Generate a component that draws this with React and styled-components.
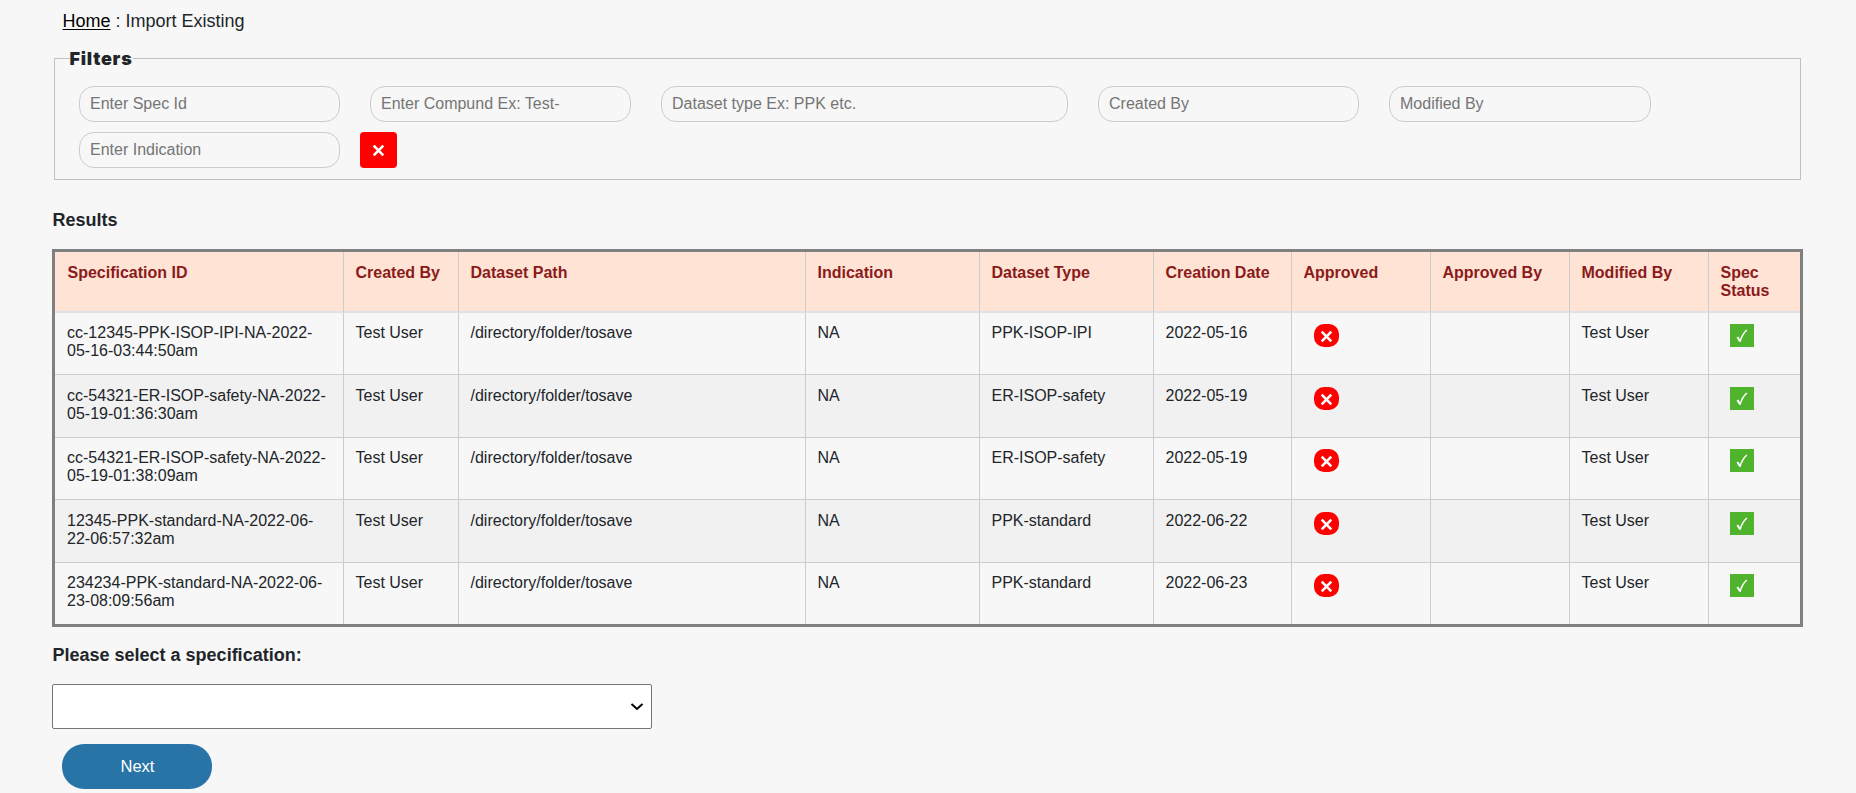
import React from 'react';
import styled, { createGlobalStyle } from 'styled-components';

const Global = createGlobalStyle`
  *, *::before, *::after { box-sizing: border-box; }
  body {
    margin: 0;
    background: #f7f7f7;
    color: #212529;
    font: 16px/18px "Liberation Sans", Arial, sans-serif;
    overflow: hidden;
  }
`;

const Page = styled.main`
  width: 1751px;
  margin-left: 52px;
  height: 793px;
  overflow: hidden;
`;

const Breadcrumb = styled.nav`
  padding: 11px 0 0 10.5px;
  font-size: 18px;
  line-height: 20px;
  a { color: #000; text-decoration: underline; text-underline-offset: 2px; text-decoration-thickness: 1px; }
`;

const Filters = styled.fieldset`
  width: 1747px;
  height: 132px;
  margin: 17px 0 0 2px;
  padding: 0 0 0 24px;
  border: 1px solid #c0c0c0;
`;

const Legend = styled.legend`
  margin-left: -9.5px;
  padding: 0;
  font: 900 18px/21px Inter, sans-serif;
  letter-spacing: 0.75px;
  height: 21px;
`;

const FilterRow = styled.div`
  display: flex;
  gap: ${(p) => p.$gap}px;
  margin-top: ${(p) => p.$top}px;
`;

const FilterInput = styled.input`
  width: ${(p) => p.$width || 261}px;
  height: 36px;
  padding: 0 10px;
  border: 1px solid #ccc;
  border-radius: 15px;
  background: transparent;
  font: 16px "Liberation Sans", Arial, sans-serif;
  &::placeholder { color: #757575; opacity: 1; }
`;

const ClearButton = styled.button`
  display: flex;
  align-items: center;
  justify-content: center;
  width: 37px;
  height: 36px;
  padding: 0;
  border: 0;
  border-radius: 4px;
  background: #f00;
`;

const Heading = styled.h2`
  margin: ${(p) => p.$top}px 0 0 0.5px;
  font-size: 18px;
  line-height: 20px;
  font-weight: 700;
`;

const Table = styled.table`
  width: 1751px;
  margin-top: 19px;
  border: 3px solid #808080;
  border-collapse: separate;
  border-spacing: 0;
  table-layout: fixed;
`;

const HeadCell = styled.th`
  height: 61px;
  padding: 12px 10px 0 11.5px;
  border-right: 1px solid #ccc;
  border-bottom: 2px solid #dee2e6;
  background: #ffe3d5;
  color: #8b1a1a;
  text-align: left;
  vertical-align: top;
  &:first-child { padding-left: 12.5px; }
  &:last-child { border-right: 0; }
`;

const Cell = styled.td`
  padding: 11px 10px 0 11.5px;
  border-right: 1px solid #ccc;
  border-bottom: 1px solid #ccc;
  vertical-align: top;
  &:first-child { padding-left: 12px; }
  &:last-child { padding-left: 11px; border-right: 0; }
`;

const Row = styled.tr`
  height: 62px;
  &:nth-child(even) { height: 63px; background: #f1f1f1; }
  &:nth-child(even) ${Cell} { padding-top: 12px; }
  &:last-child { height: 61px; }
  &:last-child ${Cell} { border-bottom: 0; }
`;

const Badge = styled.span`
  display: flex;
  align-items: center;
  justify-content: center;
  width: ${(p) => (p.$ok ? 24 : 25)}px;
  height: 23px;
  padding-top: 1px;
  margin-left: ${(p) => (p.$ok ? 10 : 10.5)}px;
  border-radius: ${(p) => (p.$ok ? 0 : 10)}px;
  background: ${(p) => (p.$ok ? '#4fb32d' : '#f00')};
`;

const SelectBox = styled.div`
  position: relative;
  width: 600px;
  margin-top: 19px;
  svg {
    position: absolute;
    top: 19px;
    right: 8px;
    pointer-events: none;
  }
`;

const SpecSelect = styled.select`
  display: block;
  appearance: none;
  width: 100%;
  height: 45px;
  border: 1px solid #767676;
  border-radius: 2px;
  background: #fff;
  font-size: 16px;
`;

const NextButton = styled.button`
  display: block;
  width: 150px;
  height: 45px;
  margin: 15px 0 0 10px;
  padding: 0 0 0 1px;
  border: 0;
  border-radius: 22px;
  background: #2874a6;
  color: #fff;
  font: 16.5px "Liberation Sans", Arial, sans-serif;
`;

const Cross = () => (
  <svg width="13" height="13" viewBox="0 0 13 13" fill="none" stroke="#fff" strokeWidth="2.6">
    <path d="M1.7 1.7 11.3 11.3M11.3 1.7 1.7 11.3" />
  </svg>
);

const Check = () => (
  <svg width="12" height="14" viewBox="0 0 12 14" fill="none" stroke="#fff">
    <path d="M1.4 8 4 12.3" strokeWidth="2.1" />
    <path d="M4 12.8C5 9 7.5 4 10.8 1" strokeWidth="1.5" />
  </svg>
);

const Chevron = () => (
  <svg width="14" height="8" viewBox="0 0 14 8" fill="none" stroke="#000" strokeWidth="2">
    <path d="M1.5 1 7 6 12.5 1" />
  </svg>
);

const columns = [
  ['Specification ID', 289], ['Created By', 115], ['Dataset Path', 347], ['Indication', 174],
  ['Dataset Type', 174], ['Creation Date', 138], ['Approved', 139], ['Approved By', 139],
  ['Modified By', 139], ['Spec Status', 91],
];

const specs = [
  [['cc-12345-PPK-ISOP-IPI-NA-2022-', '05-16-03:44:50am'], 'PPK-ISOP-IPI', '2022-05-16'],
  [['cc-54321-ER-ISOP-safety-NA-2022-', '05-19-01:36:30am'], 'ER-ISOP-safety', '2022-05-19'],
  [['cc-54321-ER-ISOP-safety-NA-2022-', '05-19-01:38:09am'], 'ER-ISOP-safety', '2022-05-19'],
  [['12345-PPK-standard-NA-2022-06-', '22-06:57:32am'], 'PPK-standard', '2022-06-22'],
  [['234234-PPK-standard-NA-2022-06-', '23-08:09:56am'], 'PPK-standard', '2022-06-23'],
];

export default function App() {
  return (
    <Page>
      <Global />
      <Breadcrumb><a>Home</a> : Import Existing</Breadcrumb>
      <Filters>
        <Legend>Filters</Legend>
        <FilterRow $gap={30} $top={17}>
          <FilterInput placeholder="Enter Spec Id" />
          <FilterInput placeholder="Enter Compund Ex: Test-" />
          <FilterInput placeholder="Dataset type Ex: PPK etc." $width={407} />
          <FilterInput placeholder="Created By" />
          <FilterInput placeholder="Modified By" $width={262} />
        </FilterRow>
        <FilterRow $gap={20} $top={10}>
          <FilterInput placeholder="Enter Indication" />
          <ClearButton aria-label="Clear filters"><Cross /></ClearButton>
        </FilterRow>
      </Filters>
      <Heading $top={30}>Results</Heading>
      <Table>
        <colgroup>{columns.map(([name, width]) => <col key={name} width={width} />)}</colgroup>
        <thead>
          <tr>{columns.map(([name]) => <HeadCell key={name}>{name}</HeadCell>)}</tr>
        </thead>
        <tbody>
          {specs.map(([id, type, date]) => (
            <Row key={id.join('')}>
              <Cell>{id[0]}<br />{id[1]}</Cell>
              <Cell>Test User</Cell>
              <Cell>/directory/folder/tosave</Cell>
              <Cell>NA</Cell>
              <Cell>{type}</Cell>
              <Cell>{date}</Cell>
              <Cell><Badge><Cross /></Badge></Cell>
              <Cell />
              <Cell>Test User</Cell>
              <Cell><Badge $ok><Check /></Badge></Cell>
            </Row>
          ))}
        </tbody>
      </Table>
      <Heading $top={18}>Please select a specification:</Heading>
      <SelectBox>
        <SpecSelect aria-label="Specification" />
        <Chevron />
      </SelectBox>
      <NextButton>Next</NextButton>
    </Page>
  );
}
